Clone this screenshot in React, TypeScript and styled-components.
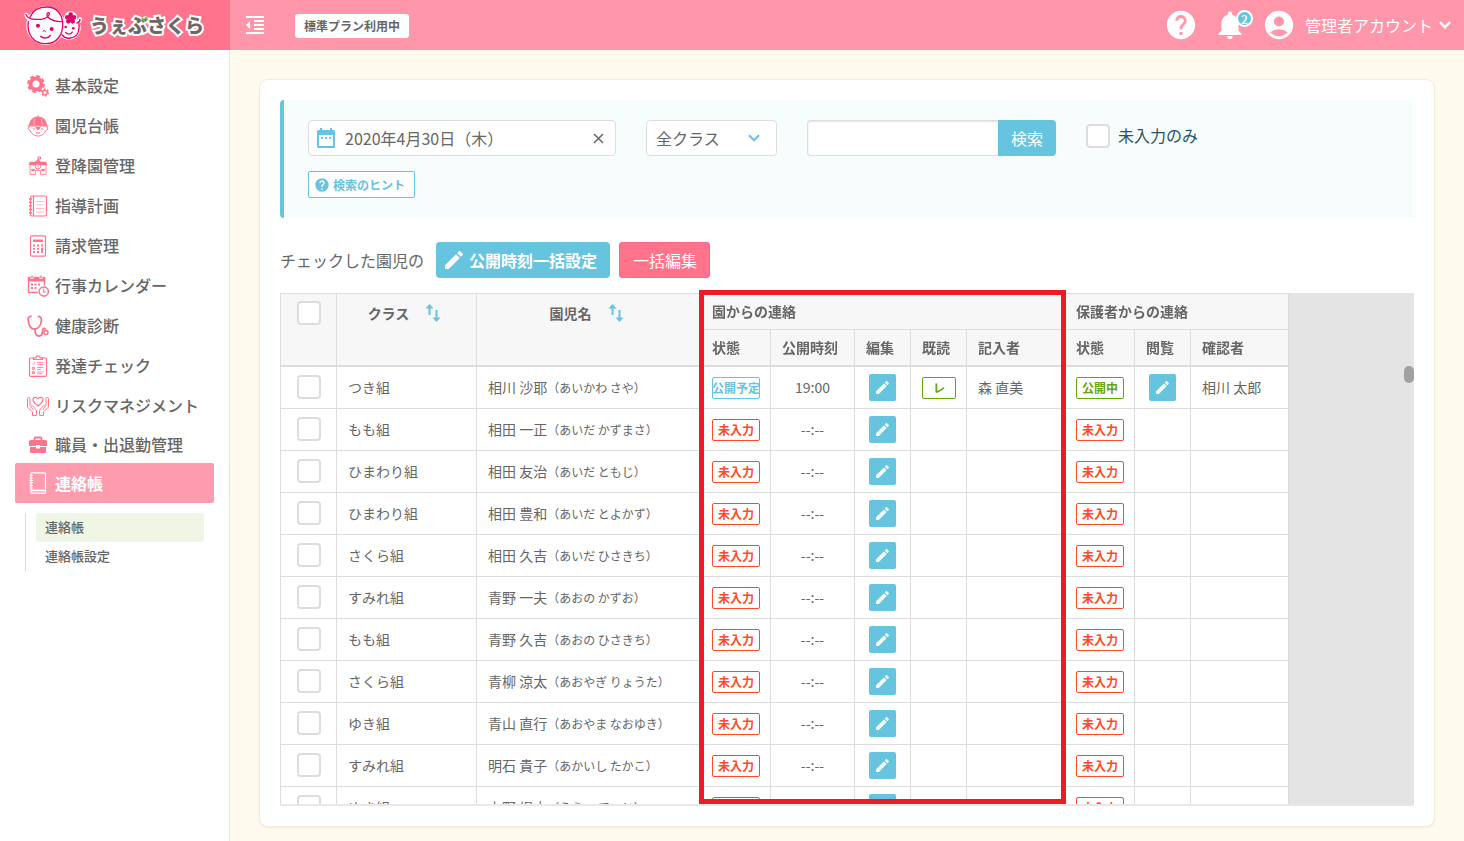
import React from 'react';
import styled, { createGlobalStyle, css } from 'styled-components';
import {
  MdAccountCircle,
  MdEdit,
  MdFormatIndentDecrease,
  MdHelp,
  MdNotifications,
} from 'react-icons/md';

const color = {
  text: '#666',
  line: '#ddd',
  blue: '#67c4df',
  pink: '#ff748c',
  pinkLight: '#ff96a9',
  green: '#62a60a',
  red: '#ff4a2a',
};

const GlobalStyle = createGlobalStyle`
  *, *::before, *::after { box-sizing: border-box; }
  body {
    margin: 0;
    background: #fffaed;
    color: ${color.text};
    font-family: "Noto Sans CJK JP", "Noto Sans", sans-serif;
    font-size: 14px;
    line-height: 20px;
  }
  button, input, select { font: inherit; color: inherit; margin: 0; }
  button { cursor: pointer; }
  svg { display: block; flex: none; }
`;

/* ---------- page frame ---------- */

const Page = styled.div`
  display: flex;
  flex-direction: column;
  min-height: 100vh;
`;

const Header = styled.header`
  display: flex;
  align-items: center;
  height: 50px;
  background: ${color.pinkLight};
  color: #fff;
`;

const Logo = styled.a`
  display: flex;
  align-items: center;
  gap: 5px;
  width: 230px;
  height: 50px;
  padding-left: 23px;
  background: ${color.pink};
  text-decoration: none;
`;

const LogoName = styled.span`
  position: relative;
  color: #6f6765;
  font-size: 19px;
  font-weight: 900;
  line-height: 28px;
  -webkit-text-stroke: 4px #fff;
  paint-order: stroke fill;
`;

const LogoLeaf = styled.svg`
  position: absolute;
  left: 51px;
  top: 5px;
  fill: none;
  paint-order: normal;
`;

const IconButton = styled.button`
  position: relative;
  display: flex;
  padding: 0;
  border: 0;
  background: none;
  color: #fff;
`;

const MenuToggle = styled(IconButton)`
  margin: 0 28px 0 13px;
`;

const Plan = styled.span`
  margin-top: 2px;
  padding: 0 9px;
  border-radius: 3px;
  background: #fff;
  color: ${color.text};
  font-size: 12px;
  font-weight: 700;
  line-height: 24px;
`;

const HeaderTools = styled.div`
  display: flex;
  align-items: center;
  gap: 15px;
  margin-left: auto;
  padding-right: 13px;
`;

const Badge = styled.span`
  position: absolute;
  right: -6px;
  top: 2px;
  width: 17px;
  height: 17px;
  border: 2px solid #fff;
  border-radius: 9px;
  background: ${color.blue};
  font-size: 12px;
  font-weight: 500;
  line-height: 13px;
  text-align: center;
`;

const Account = styled(IconButton)`
  align-items: center;
  gap: 6px;
  font-size: 16px;
  line-height: 24px;
`;

const AccountName = styled.span`
  margin-left: 3px;
`;

const Body = styled.div`
  display: flex;
  flex: 1;
`;

/* ---------- side navigation ---------- */

const Sidebar = styled.nav`
  flex: none;
  width: 230px;
  padding: 16px 15px 0;
  border-right: 1px solid #e8e8e8;
  background: #fff;
`;

const NavLabel = styled.span`
  padding-bottom: 2px;
`;

const NavLink = styled.a<{ $active?: boolean; $short?: boolean }>`
  display: flex;
  align-items: center;
  gap: 6px;
  height: ${(p) => (p.$short ? 37 : 40)}px;
  padding-left: 12px;
  border-radius: 2px;
  color: ${color.text};
  font-size: 16px;
  font-weight: 500;
  text-decoration: none;
  white-space: nowrap;
  svg { color: ${color.pink}; }
  ${(p) =>
    p.$active &&
    css`
      background: #ff9bae;
      color: #fff;
      font-weight: 700;
      svg { color: #fff; }
      ${NavLabel} { padding-bottom: 0; }
    `}
`;

const SubNav = styled.div`
  margin: 10px 10px 0;
  padding-left: 10px;
  border-left: 1px solid ${color.line};
`;

const SubLink = styled.a<{ $active?: boolean }>`
  display: block;
  padding: 0 0 2px 9px;
  border-radius: 2px;
  background: ${(p) => (p.$active ? '#eff6e6' : 'transparent')};
  color: ${color.text};
  font-size: 13px;
  font-weight: 500;
  line-height: 27px;
  text-decoration: none;
`;

/* ---------- content ---------- */

const Main = styled.main`
  flex: 1;
  min-width: 0;
  padding: 30px 30px 15px;
`;

const Card = styled.section`
  padding: 20px;
  border-radius: 8px;
  background: #fff;
  box-shadow: 0 0 0 1px #f5ecdc, 0 1px 3px rgba(0, 0, 0, 0.12);
`;

const SearchPanel = styled.form`
  padding: 20px 24px;
  border-left: 4px solid ${color.blue};
  border-radius: 4px 0 0 4px;
  background: #f7fdfd;
`;

const Filters = styled.div`
  display: flex;
  gap: 30px;
  margin-bottom: 15px;
`;

const field = css`
  height: 36px;
  border: 1px solid ${color.line};
  border-radius: 4px;
  background: #fff;
`;

const DateField = styled.label`
  ${field}
  display: flex;
  align-items: center;
  gap: 9px;
  width: 308px;
  padding: 0 9px 0 7px;
`;

const DateInput = styled.input`
  flex: 1;
  min-width: 0;
  padding: 0;
  border: 0;
  outline: 0;
  background: none;
  font-size: 16px;
  line-height: 24px;
`;

const ClearButton = styled.button`
  display: flex;
  padding: 0;
  border: 0;
  background: none;
`;

const SelectField = styled.label`
  ${field}
  display: flex;
  align-items: center;
  width: 131px;
  padding-right: 15px;
`;

const Select = styled.select`
  flex: 1;
  height: 34px;
  padding: 0 0 0 9px;
  border: 0;
  outline: 0;
  appearance: none;
  background: none;
  font-size: 16px;
`;

const SearchGroup = styled.div`
  display: flex;
`;

const SearchInput = styled.input`
  ${field}
  width: 191px;
  padding: 0 10px;
  border-right: 0;
  border-radius: 4px 0 0 4px;
  box-shadow: inset 0 1px 2px rgba(0, 0, 0, 0.12);
  outline: 0;
`;

const SearchButton = styled.button`
  width: 58px;
  height: 36px;
  padding: 0;
  border: 0;
  border-radius: 0 4px 4px 0;
  background: ${color.blue};
  color: #fff;
  font-size: 16px;
`;

const Check = styled.input.attrs({ type: 'checkbox' })`
  display: block;
  flex: none;
  width: 24px;
  height: 24px;
  border: 2px solid ${color.line};
  border-radius: 4px;
  background: #fff;
  appearance: none;
  &:checked { background: ${color.blue}; }
`;

const CheckLabel = styled.label`
  display: flex;
  align-items: center;
  gap: 8px;
  height: 32px;
  color: #2a5363;
  font-size: 16px;
`;

const CheckText = styled.span`
  padding-bottom: 2px;
`;

const HintButton = styled.button`
  display: flex;
  align-items: center;
  gap: 3px;
  height: 27px;
  padding: 0 9px 0 5px;
  border: 1px solid ${color.blue};
  border-radius: 2px;
  background: #fff;
  color: ${color.blue};
  font-size: 12px;
  font-weight: 700;
`;

const Actions = styled.div`
  display: flex;
  align-items: center;
  margin: 24px 0 15px;
  font-size: 16px;
`;

const ActionButton = styled.button<{ $pink?: boolean }>`
  display: flex;
  align-items: center;
  gap: 3px;
  height: 36px;
  margin-left: ${(p) => (p.$pink ? 9 : 12)}px;
  padding: ${(p) => (p.$pink ? '0 13px 0 14px' : '0 13px 0 6px')};
  border: 0;
  border-radius: 4px;
  background: ${(p) => (p.$pink ? '#ff738b' : color.blue)};
  box-shadow: ${(p) => (p.$pink ? 'inset 0 0 0 1px #ff6681' : 'none')};
  color: #fff;
  font-weight: ${(p) => (p.$pink ? 400 : 700)};
`;

/* ---------- table ---------- */

const Frame = styled.div`
  position: relative;
  border-bottom: 2px solid #e8e8e8;
`;

const Scroller = styled.div`
  height: calc(100vh - 330px);
  overflow: auto;
  scrollbar-width: none;
  background: #e4e4e4;
`;

const Thumb = styled.span`
  position: absolute;
  right: 0;
  top: 73px;
  width: 10px;
  height: 17px;
  border-radius: 5px;
  background: #a0a0a0;
`;

const Highlight = styled.span`
  position: absolute;
  z-index: 2;
  left: 419px;
  top: -3px;
  bottom: 0;
  width: 367px;
  border: 5px solid #ed1c24;
  pointer-events: none;
`;

const Table = styled.table`
  width: 1009px;
  border-spacing: 0;
  table-layout: fixed;
  background: #fff;
`;

const Head = styled.thead`
  position: sticky;
  top: 0;
  z-index: 1;
`;

const cell = css<{ $center?: boolean; $control?: boolean }>`
  padding: 0 0 ${(p) => (p.$control ? 0 : 2)}px ${(p) => (p.$center ? 0 : 11)}px;
  border: solid ${color.line};
  border-width: 0 1px 1px 0;
  text-align: ${(p) => (p.$center ? 'center' : 'left')};
  white-space: nowrap;
  &:first-child { border-left-width: 1px; }
`;

const GroupTh = styled.th`
  ${cell}
  height: 37px;
  border-top-width: 1px;
  background: #f7f7f7;
`;

const TallTh = styled(GroupTh)`
  padding-top: 7px;
  border-bottom-width: 2px;
  vertical-align: top;
`;

const ColumnTh = styled.th`
  ${cell}
  height: 37px;
  border-bottom-width: 2px;
  background: #f7f7f7;
  &:first-child { border-left-width: 0; }
`;

const Td = styled.td`
  ${cell}
  height: 42px;
`;

const Centered = styled.div`
  display: flex;
  justify-content: center;
`;

const SortButton = styled.button`
  display: flex;
  align-items: center;
  justify-content: center;
  gap: 12px;
  width: 100%;
  height: 24px;
  padding: 0;
  border: 0;
  background: none;
  font-weight: 700;
`;

const Kana = styled.span`
  font-size: 12px;
  line-height: 12px;
`;

const Tag = styled.span<{ $tone: string; $narrow?: boolean }>`
  display: flex;
  justify-content: center;
  width: ${(p) => (p.$narrow ? 34 : 48)}px;
  height: 22px;
  border: 1px solid ${(p) => p.$tone};
  border-radius: 2px;
  color: ${(p) => p.$tone};
  font-size: 12px;
  font-weight: 700;
  line-height: 20px;
`;

const EditButton = styled.button`
  display: flex;
  align-items: center;
  justify-content: center;
  width: 27px;
  height: 27px;
  padding: 0;
  border: 0;
  border-radius: 2px;
  background: ${color.blue};
  color: #fff;
`;

/* ---------- drawings ---------- */

const LogoFaces = () => (
  <svg width="62" height="44" viewBox="70 8 186 132" aria-hidden="true">
    <g fill="#fff" stroke="#fff" strokeWidth="12" strokeLinejoin="round" strokeLinecap="round">
      <circle cx="138" cy="76" r="52" />
      <circle cx="208" cy="83" r="29" />
      <circle cx="213" cy="53" r="14" />
      <path d="M80 43c2 8 8 13 16 14M232 66c6-1 9-4 9-9" fill="none" />
    </g>
    <g fill="none" stroke="#e5006e" strokeWidth="4" strokeLinecap="round">
      <path d="M79 42c3 10 14 15 30 15 16 1 26-1 34-7 7-5 8-13 3-13-5 1-6 8-1 14 8 8 22 13 40 13" />
      <path d="M91 51C100 26 120 20 142 20c27 0 45 20 47 46 2 36-16 64-51 64-36 0-58-29-52-66" />
      <path d="M187 104c7 8 16 11 25 9 18-2 28-17 26-43M232 68c6-1 9-5 9-11" />
      <path d="M123 108c8 8 24 6 29-3" />
      <path d="M198 96c5 8 16 7 20-1" />
      <path d="M130 93c0-4 7-4 7 1" strokeWidth="3" />
    </g>
    <g fill="#e5006e">
      <circle cx="115" cy="76" r="6" />
      <circle cx="156" cy="86" r="6" />
      <circle cx="198" cy="80" r="4" />
      <circle cx="221" cy="84" r="4" />
      <circle cx="213" cy="43" r="7" />
      <circle cx="223" cy="51" r="7" />
      <circle cx="219" cy="63" r="7" />
      <circle cx="206" cy="63" r="7" />
      <circle cx="203" cy="51" r="7" />
      <circle cx="213" cy="54" r="8" />
    </g>
  </svg>
);

const ChevronIcon = ({ width = 12, weight = 2.4 }: { width?: number; weight?: number }) => (
  <svg width={width} height="8" viewBox="0 0 12 8" fill="none" stroke="currentColor" strokeWidth={weight}>
    <path d="M1 1.200l5 5 5-5" />
  </svg>
);

const SelectChevron = styled.span`
  color: ${color.blue};
`;

const CalendarIcon = () => (
  <svg width="20" height="22" viewBox="0 0 20 22" fill={color.blue}>
    <path d="M4 1h2v2h8V1h2v2h1.500a1.500 1.500 0 0 1 1.500 1.500v15a1.500 1.500 0 0 1-1.500 1.500h-15A1.500 1.500 0 0 1 1 19.500v-15A1.500 1.500 0 0 1 2.500 3H4zM3 8v11h14V8z" fillRule="evenodd" />
    <path d="M5 10h2v2H5zm4 0h2v2H9zm4 0h2v2h-2z" />
  </svg>
);

const SortIcon = () => (
  <svg width="24" height="24" viewBox="0 0 24 24" fill={color.blue}>
    <path d="M8.500 3l4 4.500h-3V14h-2V7.500h-3zM15.500 21l4-4.500h-3V9h-2v7.500h-3z" />
  </svg>
);

const CloseIcon = () => (
  <svg width="15" height="15" viewBox="0 0 15 15" stroke="#666" strokeWidth="1.500">
    <path d="M3 3l9 9M12 3l-9 9" />
  </svg>
);

const NavSvg = ({ children }: { children: React.ReactNode }) => (
  <svg width="22" height="22" viewBox="0 0 22 22" fill="none" stroke="currentColor" strokeWidth="1.200" strokeLinejoin="round">
    {children}
  </svg>
);

const GearsIcon = () => (
  <NavSvg>
    <circle cx="9" cy="9" r="5.500" strokeWidth="4" />
    <circle cx="9" cy="9" r="7.800" strokeWidth="2.200" strokeDasharray="3.600 2.530" />
    <circle cx="18" cy="17.500" r="2.300" strokeWidth="1.600" />
    <circle cx="18" cy="17.500" r="3.500" strokeWidth="1.300" strokeDasharray="1.800 1.860" />
  </NavSvg>
);

const ChildIcon = () => (
  <NavSvg>
    <path d="M2.500 10C3 5 6.500 2 11 2s8 3 8.500 8z" fill="currentColor" />
    <path d="M8 3.500C7 5.500 6.800 8 7 10M14 3.500c1 2 1.200 4.500 1 6.500" stroke="#fff" strokeWidth=".5" />
    <path d="M11 .5v2M.5 10.800h21" />
    <path d="M3 12c-2-.5-2.700 2.500 0 3.500 2 4 5 5.500 8 5.500s6-1.500 8-5.500c2.700-1 2-4 0-3.500" strokeWidth="1" />
    <path d="M9 12.500l2 2 2-2z" fill="currentColor" />
    <path d="M6 14h2M14 14h2M9 17.500c1.500 1 2.500 1 4 0" />
  </NavSvg>
);

const SchoolIcon = () => (
  <NavSvg>
    <path d="M11 2v4M11 2h2.500v2H11" strokeWidth="1" />
    <path d="M2 10l1-3h5l3-2.500L14 7h5l1 3z" fill="currentColor" strokeWidth=".6" />
    <path d="M3 10.500V19.500h5.500v-4h5v4H19v-9" strokeWidth=".8" />
    <circle cx="11" cy="11.500" r="2.600" fill="#fff" strokeWidth="1" />
    <path d="M11 10v1.800h1" strokeWidth=".8" />
    <path d="M4.500 14h3v2h-3zM14.500 14h3v2h-3z" fill="currentColor" strokeWidth=".3" />
  </NavSvg>
);

const PlanIcon = () => (
  <NavSvg>
    <rect x="3.500" y="1" width="16" height="20" rx="1.500" />
    <path d="M6.500 1v20" />
    <path d="M9 6.500h8M9 10h8M9 13.500h8M9 17h8" strokeWidth=".8" opacity=".6" />
    <path d="M2 4h3M2 7.500h3M2 11h3M2 14.500h3M2 18h3" strokeWidth="1.400" />
  </NavSvg>
);

const CalculatorIcon = () => (
  <NavSvg>
    <rect x="3.500" y=".8" width="15" height="20.400" rx="1.500" />
    <rect x="6" y="4.500" width="10" height="2.500" fill="currentColor" stroke="none" />
    <path d="M6 10.500h2m2 0h2m2 0h2M6 13.800h2m2 0h2M6 17h2m2 0h2" strokeWidth="1.800" />
    <path d="M15 12.800v5" strokeWidth="2" />
  </NavSvg>
);

const EventsIcon = () => (
  <NavSvg>
    <path d="M11 17.500H1.500v-15h16v8" strokeWidth="1.400" />
    <path d="M1.500 3h16v3h-16z" fill="currentColor" />
    <path d="M5 0v4M14 0v4" stroke="#fff" strokeWidth="2.800" />
    <path d="M5 .5v3M14 .5v3" strokeWidth="1.400" />
    <path d="M4 9.500h2m1.500 0h2m1.500 0h2M4 13h2m1.500 0h2" strokeWidth="2" />
    <circle cx="16.800" cy="16.500" r="4.600" fill="#fff" strokeWidth="1.500" />
    <path d="M16.500 13.800V17h2.700" />
  </NavSvg>
);

const StethoscopeIcon = () => (
  <NavSvg>
    <g strokeWidth="1.800" strokeLinecap="round">
      <path d="M4 1.300c-2.500.2-3 1.500-2.700 4C1.800 10 3.500 14 7.500 14s6.500-4 6.900-8.700c.2-2.500-.5-3.800-3-4" />
      <path d="M8 14c0 4.500 1.500 7 4 7s3.500-2 3.500-4.500c0-2 .5-3 2-3" />
      <circle cx="19" cy="17.500" r="2" strokeWidth="1.500" />
      <path d="M17.500 13.500c1.200 0 1.500 1 1.500 2" strokeWidth="1.300" />
    </g>
  </NavSvg>
);

const ClipboardIcon = () => (
  <NavSvg>
    <rect x="2.500" y="3" width="17" height="18.300" rx="1.200" />
    <path d="M6.500 4.500V2.800H9C9 1.500 10 .8 11 .8s2 .7 2 2h2.500v1.700z" fill="#fff" />
    <path d="M5 8.500l1 1 2-2.500M10 7.500h6.500M10 9.500h6.500M10 12.500h6.500M10 14.500h4M10 17h6.500M10 18.800h5" strokeWidth=".8" />
    <path d="M5.300 12.300h2v2h-2zM5.300 16.800h2v2h-2z" strokeWidth="1" />
  </NavSvg>
);

const HandsHeartIcon = () => (
  <NavSvg>
    <path d="M11 11C8 8.500 6 7 6 4.500 6 2 9.500 1.500 11 4c1.500-2.500 5-2 5 .5 0 2.500-2 4-5 6.500z" />
    <path d="M1 2.500C.5 2.500.5 3 .5 3.500V12L5.500 17v3.500h4V16c0-1.500-4.500-6.500-5.500-5.500-1 .8 0 1.500 2.500 4.500M3 10.500v-7c0-1-1-1-2-1" strokeWidth="1" />
    <path d="M21 2.500c.5 0 .5.500.5 1V12L16.500 17v3.500h-4V16c0-1.500 4.500-6.500 5.500-5.500 1 .8 0 1.500-2.500 4.500M19 10.500v-7c0-1 1-1 2-1" strokeWidth="1" />
  </NavSvg>
);

const BriefcaseIcon = () => (
  <NavSvg>
    <path d="M7.500 7V4.500c0-.6.400-1 1-1h5c.6 0 1 .4 1 1V7" strokeWidth="1.800" />
    <path d="M3.500 6h15A1.500 1.500 0 0 1 20 7.500V12h-7v-1H9v1H2V7.500A1.500 1.500 0 0 1 3.500 6zM3 13h6v1.500h4V13h6v5a1 1 0 0 1-1 1H4a1 1 0 0 1-1-1z" fill="currentColor" stroke="none" />
  </NavSvg>
);

const NotebookIcon = () => (
  <NavSvg>
    <path d="M4 2c0-.8.500-1.200 1.200-1.200h12c.8 0 1.300.5 1.300 1.300v18.200c0 .8-.5 1.200-1.300 1.200H5.500C4.500 21.500 4 21 4 20z" />
    <path d="M4 18.300h14.500" strokeWidth="1.400" />
    <path d="M5 20h13.500" opacity=".6" />
    <path d="M2.500 3.500h3.500M2.500 6h3.500M2.500 8.500h3.500M2.500 11h3.500M2.500 13.500h3.500M2.500 16h3.500" />
  </NavSvg>
);

/* ---------- data ---------- */

const navItems = [
  { label: '基本設定', Icon: GearsIcon },
  { label: '園児台帳', Icon: ChildIcon },
  { label: '登降園管理', Icon: SchoolIcon },
  { label: '指導計画', Icon: PlanIcon },
  { label: '請求管理', Icon: CalculatorIcon },
  { label: '行事カレンダー', Icon: EventsIcon },
  { label: '健康診断', Icon: StethoscopeIcon },
  { label: '発達チェック', Icon: ClipboardIcon },
  { label: 'リスクマネジメント', Icon: HandsHeartIcon },
  { label: '職員・出退勤管理', Icon: BriefcaseIcon, short: true },
  { label: '連絡帳', Icon: NotebookIcon, active: true },
];

type Child = {
  room: string;
  name: string;
  kana: string;
  sent?: { time: string; writer: string };
  received?: { checker: string };
};

const children: Child[] = [
  {
    room: 'つき組',
    name: '相川 沙耶',
    kana: 'あいかわ さや',
    sent: { time: '19:00', writer: '森 直美' },
    received: { checker: '相川 太郎' },
  },
  { room: 'もも組', name: '相田 一正', kana: 'あいだ かずまさ' },
  { room: 'ひまわり組', name: '相田 友治', kana: 'あいだ ともじ' },
  { room: 'ひまわり組', name: '相田 豊和', kana: 'あいだ とよかず' },
  { room: 'さくら組', name: '相田 久吉', kana: 'あいだ ひさきち' },
  { room: 'すみれ組', name: '青野 一夫', kana: 'あおの かずお' },
  { room: 'もも組', name: '青野 久吉', kana: 'あおの ひさきち' },
  { room: 'さくら組', name: '青柳 涼太', kana: 'あおやぎ りょうた' },
  { room: 'ゆき組', name: '青山 直行', kana: 'あおやま なおゆき' },
  { room: 'すみれ組', name: '明石 貴子', kana: 'あかいし たかこ' },
  { room: 'ゆき組', name: '上野 堤士', kana: 'うえの ていじ' },
];

const columnWidths = [57, 140, 224, 70, 84, 56, 56, 98, 70, 56, 98];

const ChildRow = ({ child }: { child: Child }) => (
  <tr>
    <Td $center>
      <Centered>
        <Check aria-label={child.name} />
      </Centered>
    </Td>
    <Td>{child.room}</Td>
    <Td>
      {child.name}
      <Kana>（{child.kana}）</Kana>
    </Td>
    <Td $control>
      <Tag $tone={child.sent ? color.blue : color.red}>{child.sent ? '公開予定' : '未入力'}</Tag>
    </Td>
    <Td $center>{child.sent ? child.sent.time : '--:--'}</Td>
    <Td $center $control>
      <Centered>
        <EditButton type="button" aria-label="編集">
          <MdEdit size={17} />
        </EditButton>
      </Centered>
    </Td>
    <Td $control>{child.sent && <Tag $tone={color.green} $narrow>レ</Tag>}</Td>
    <Td>{child.sent?.writer}</Td>
    <Td $control>
      <Tag $tone={child.received ? color.green : color.red}>{child.received ? '公開中' : '未入力'}</Tag>
    </Td>
    <Td $center $control>
      {child.received && (
        <Centered>
          <EditButton type="button" aria-label="閲覧">
            <MdEdit size={17} />
          </EditButton>
        </Centered>
      )}
    </Td>
    <Td>{child.received?.checker}</Td>
  </tr>
);

export default function App() {
  return (
    <Page>
      <GlobalStyle />
      <Header>
        <Logo href="#">
          <LogoFaces />
          <LogoName>
            うぇぶさくら
            <LogoLeaf width="8" height="7" viewBox="0 0 8 7" stroke="#6dbb2c" strokeWidth="2" aria-hidden="true">
              <path d="M1 2l2 3M4.500 1l2 3" />
            </LogoLeaf>
          </LogoName>
        </Logo>
        <MenuToggle type="button" aria-label="メニュー">
          <MdFormatIndentDecrease size={24} />
        </MenuToggle>
        <Plan>標準プラン利用中</Plan>
        <HeaderTools>
          <IconButton type="button" aria-label="ヘルプ">
            <MdHelp size={34} />
          </IconButton>
          <IconButton type="button" aria-label="お知らせ">
            <MdNotifications size={34} />
            <Badge>2</Badge>
          </IconButton>
          <Account type="button">
            <MdAccountCircle size={34} />
            <AccountName>管理者アカウント</AccountName>
            <ChevronIcon />
          </Account>
        </HeaderTools>
      </Header>

      <Body>
        <Sidebar>
          {navItems.map(({ label, Icon, active, short }) => (
            <NavLink key={label} href="#" $active={active} $short={short}>
              <Icon />
              <NavLabel>{label}</NavLabel>
            </NavLink>
          ))}
          <SubNav>
            <SubLink href="#" $active>連絡帳</SubLink>
            <SubLink href="#">連絡帳設定</SubLink>
          </SubNav>
        </Sidebar>

        <Main>
          <Card>
            <SearchPanel onSubmit={(e) => e.preventDefault()}>
              <Filters>
                <DateField>
                  <CalendarIcon />
                  <DateInput type="text" aria-label="日付" defaultValue="2020年4月30日（木）" />
                  <ClearButton type="button" aria-label="クリア">
                    <CloseIcon />
                  </ClearButton>
                </DateField>
                <SelectField>
                  <Select aria-label="クラス">
                    <option>全クラス</option>
                  </Select>
                  <SelectChevron>
                    <ChevronIcon width={14} weight={2.2} />
                  </SelectChevron>
                </SelectField>
                <SearchGroup>
                  <SearchInput type="text" aria-label="キーワード" />
                  <SearchButton type="submit">検索</SearchButton>
                </SearchGroup>
                <CheckLabel>
                  <Check />
                  <CheckText>未入力のみ</CheckText>
                </CheckLabel>
              </Filters>
              <HintButton type="button">
                <MdHelp size={16} />
                検索のヒント
              </HintButton>
            </SearchPanel>

            <Actions>
              チェックした園児の
              <ActionButton type="button">
                <MdEdit size={24} />
                公開時刻一括設定
              </ActionButton>
              <ActionButton type="button" $pink>一括編集</ActionButton>
            </Actions>

            <Frame>
              <Scroller>
                <Table>
                  <colgroup>
                    {columnWidths.map((width, i) => (
                      <col key={i} width={width} />
                    ))}
                  </colgroup>
                  <Head>
                    <tr>
                      <TallTh rowSpan={2} $center>
                        <Centered>
                          <Check aria-label="すべて選択" />
                        </Centered>
                      </TallTh>
                      <TallTh rowSpan={2} $center>
                        <SortButton type="button">
                          クラス
                          <SortIcon />
                        </SortButton>
                      </TallTh>
                      <TallTh rowSpan={2} $center>
                        <SortButton type="button">
                          園児名
                          <SortIcon />
                        </SortButton>
                      </TallTh>
                      <GroupTh colSpan={5}>園からの連絡</GroupTh>
                      <GroupTh colSpan={3}>保護者からの連絡</GroupTh>
                    </tr>
                    <tr>
                      <ColumnTh>状態</ColumnTh>
                      <ColumnTh>公開時刻</ColumnTh>
                      <ColumnTh>編集</ColumnTh>
                      <ColumnTh>既読</ColumnTh>
                      <ColumnTh>記入者</ColumnTh>
                      <ColumnTh>状態</ColumnTh>
                      <ColumnTh>閲覧</ColumnTh>
                      <ColumnTh>確認者</ColumnTh>
                    </tr>
                  </Head>
                  <tbody>
                    {children.map((child) => (
                      <ChildRow key={child.name} child={child} />
                    ))}
                  </tbody>
                </Table>
              </Scroller>
              <Thumb />
              <Highlight />
            </Frame>
          </Card>
        </Main>
      </Body>
    </Page>
  );
}
